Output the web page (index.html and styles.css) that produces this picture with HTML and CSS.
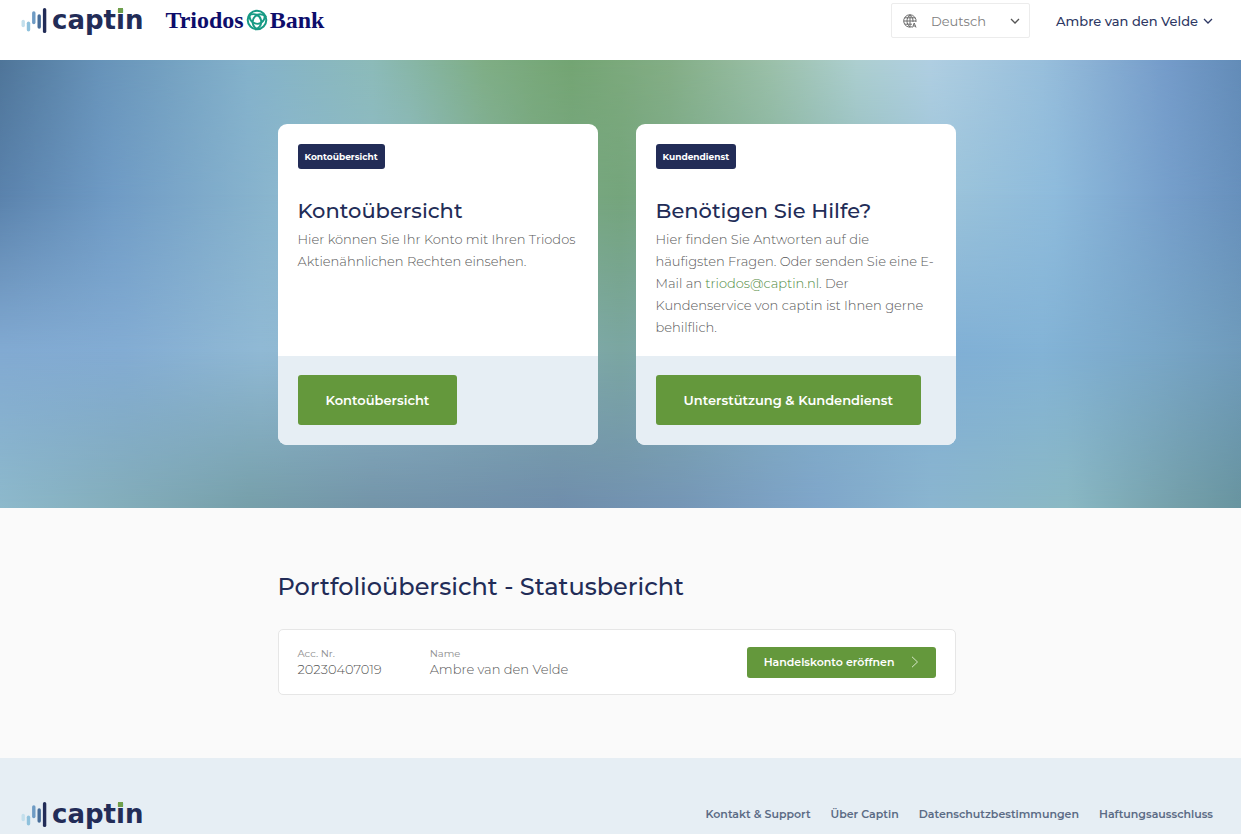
FILE: index.html
```html
<!DOCTYPE html>
<html lang="de">
<head>
<meta charset="utf-8">
<meta name="viewport" content="width=device-width, initial-scale=1">
<title>Captin – Triodos Bank</title>
<link rel="stylesheet" href="styles.css">
</head>
<body>
<header class="topbar">
  <div class="brands">
    <a class="captin" href="#">
      <svg class="captin-bars" width="26" height="28" viewBox="0 0 26 28" fill="none" stroke-width="3.4" stroke-linecap="round" aria-hidden="true">
        <path stroke="#c3dfec" d="M2.2 15.5v4"/>
        <path stroke="#8fc1dc" d="M7.5 17.2v6.6"/>
        <path stroke="#6e9bc4" d="M12.8 7v9.5"/>
        <path stroke="#466c98" d="M18.2 10v11"/>
        <path stroke="#222c57" d="M23.6 3.8v21.6"/>
      </svg>
      <span class="captin-word">capt<span class="captin-i">i</span>n</span>
    </a>
    <a class="triodos" href="#">
      <span>Triodos</span>
      <svg width="22" height="22" viewBox="0 0 22 22" fill="none" stroke="#179a84" aria-hidden="true">
        <circle cx="11" cy="11" r="9.3" stroke-width="2"/>
        <g stroke-width="1.9">
          <path d="M3 6.500C8 3.500 14 6 15 11s-2 8-6 9.400"/>
          <path d="M3 6.500C8 3.500 14 6 15 11s-2 8-6 9.400" transform="rotate(120 11 11)"/>
          <path d="M3 6.500C8 3.500 14 6 15 11s-2 8-6 9.400" transform="rotate(240 11 11)"/>
        </g>
      </svg>
      <span>Bank</span>
    </a>
  </div>
  <div class="tools">
    <div class="language">
      <svg width="14" height="14" viewBox="0 0 14 14" fill="none" stroke="#6c6c6c" aria-hidden="true">
        <path d="M9 12.800A6.200 6.200 0 1 1 13 8M.8 7H13M1.800 3.800h10.400M1.800 10.200H9M7 .8V13M7 .8C3 4 3 10 7 13M7 .8c2.500 2 3.200 4.500 3 7.200M9.500 13.500l1.700-4.500 1.800 4.500M10.200 12h2.200"/>
      </svg>
      <select class="language-select" aria-label="Sprache">
        <option>Deutsch</option>
      </select>
      <svg class="chevron" width="10" height="6" viewBox="0 0 10 6" fill="none" stroke="#555" stroke-width="1.300" aria-hidden="true"><path d="M1 1l4 4 4-4"/></svg>
    </div>
    <button class="account" type="button">Ambre van den Velde
      <svg width="10" height="6" viewBox="0 0 10 6" fill="none" stroke="currentColor" stroke-width="1.300" aria-hidden="true"><path d="M1 1l4 4 4-4"/></svg>
    </button>
  </div>
</header>

<main>
  <section class="hero">
    <div class="sky sky-1"></div>
    <div class="sky sky-2"></div>
    <div class="sky sky-3"></div>
    <div class="sky sky-4"></div>
    <div class="wrap cards">
      <article class="card">
        <div class="card-body">
          <span class="tag">Kontoübersicht</span>
          <h2 class="card-title">Kontoübersicht</h2>
          <p class="card-text">Hier können Sie Ihr Konto mit Ihren Triodos Aktienähnlichen Rechten einsehen.</p>
        </div>
        <div class="card-foot"><button class="btn" type="button">Kontoübersicht</button></div>
      </article>
      <article class="card">
        <div class="card-body">
          <span class="tag">Kundendienst</span>
          <h2 class="card-title">Benötigen Sie Hilfe?</h2>
          <p class="card-text">Hier finden Sie Antworten auf die häufigsten Fragen. Oder senden Sie eine E-Mail an <a class="mail" href="mailto:triodos@captin.nl">triodos@captin.nl</a>. Der Kundenservice von captin ist Ihnen gerne behilflich.</p>
        </div>
        <div class="card-foot"><button class="btn" type="button">Unterstützung &amp; Kundendienst</button></div>
      </article>
    </div>
  </section>

  <section class="portfolio">
    <div class="wrap">
      <h1 class="portfolio-title">Portfolioübersicht - Statusbericht</h1>
      <div class="row">
        <dl class="facts">
          <div class="fact"><dt>Acc. Nr.</dt><dd>20230407019</dd></div>
          <div class="fact"><dt>Name</dt><dd>Ambre van den Velde</dd></div>
        </dl>
        <button class="btn btn-small" type="button">Handelskonto eröffnen
          <svg width="8" height="12" viewBox="0 0 8 12" fill="none" stroke="#d5e6c8" aria-hidden="true"><path d="M1 .8L6.500 6 1 11.200"/></svg>
        </button>
      </div>
    </div>
  </section>
</main>

<footer class="footer">
  <a class="captin" href="#">
    <svg class="captin-bars" width="26" height="28" viewBox="0 0 26 28" fill="none" stroke-width="3.4" stroke-linecap="round" aria-hidden="true">
      <path stroke="#c3dfec" d="M2.2 15.5v4"/>
      <path stroke="#8fc1dc" d="M7.5 17.2v6.6"/>
      <path stroke="#6e9bc4" d="M12.8 7v9.5"/>
      <path stroke="#466c98" d="M18.2 10v11"/>
      <path stroke="#222c57" d="M23.6 3.8v21.6"/>
    </svg>
    <span class="captin-word">capt<span class="captin-i">i</span>n</span>
  </a>
  <nav class="links">
    <a href="#">Kontakt &amp; Support</a>
    <a href="#">Über Captin</a>
    <a href="#">Datenschutzbestimmungen</a>
    <a href="#">Haftungsausschluss</a>
  </nav>
</footer>
</body>
</html>
```
FILE: styles.css
```css
* { box-sizing: border-box; }

body {
  margin: 0;
  min-height: 100vh;
  background: #fafafa;
  color: #585858;
  font-family: Montserrat, Inter, sans-serif;
  font-size: 13px;
}

a { color: inherit; text-decoration: none; }
h1, h2, p, dl, dd { margin: 0; }
button { border: 0; font-family: inherit; cursor: pointer; }

.wrap { max-width: 678px; margin: 0 auto; }

.topbar {
  display: flex;
  justify-content: space-between;
  align-items: flex-start;
  height: 60px;
  padding: 0 28px 0 21px;
  background: #fff;
}

.brands { display: flex; align-items: center; gap: 22px; height: 40px; }

.captin { display: flex; align-items: center; gap: 5px; }
.captin-word {
  color: #222c57;
  font: bold 26px/30px "DejaVu Sans", sans-serif;
}
.captin-i { position: relative; }
.captin-i::after {
  content: "";
  position: absolute;
  top: 3px;
  left: 2px;
  width: 5px;
  height: 5px;
  background: #6f9f4c;
}

.triodos {
  display: flex;
  align-items: center;
  gap: 2px;
  color: #0d0d6b;
  font: bold 24px/30px "Liberation Serif", serif;
}

.tools { display: flex; align-items: center; gap: 26px; padding-top: 3px; }

.language {
  display: flex;
  align-items: center;
  gap: 14px;
  width: 139px;
  height: 35px;
  padding: 0 9px 0 11px;
  border: 1px solid #ececec;
  border-radius: 2px;
}
.language-select {
  flex: 1;
  min-width: 0;
  padding: 0;
  border: 0;
  appearance: none;
  background: none;
  color: #808080;
  font: 13px Montserrat, Inter, sans-serif;
}

.account {
  display: flex;
  align-items: center;
  gap: 5px;
  padding: 0;
  background: none;
  color: #2d3763;
  font-size: 13px;
  font-weight: 500;
}

.hero { position: relative; padding: 64px 28px 63px 20px; }
.sky { position: absolute; inset: 0; }
.sky-1 { background: linear-gradient(90deg, #4f7599 0%, #6793b9 8%, #84b2cb 20%, #8cbbb9 30%, #7fae85 39%, #74a573 46%, #84ae86 54%, #9bc0a9 62%, #adcfd0 69%, #b0cfe2 75%, #98bfdc 84%, #759cca 94%, #638cb8 100%); }
.sky-2 {
  background: linear-gradient(90deg, #5a82ac 0%, #6f9bc5 9%, #8cb8cf 23%, #8fbbc4 33%, #7baa85 43%, #75a57c 50%, #86b39f 62%, #9cc4da 76%, #8ebbdc 85%, #769fcb 94%, #6790bc 100%);
  mask-image: linear-gradient(transparent 0%, #000 30%);
}
.sky-3 {
  background: linear-gradient(90deg, #82aad2 0%, #83acd3 10%, #90b9d4 21%, #8cb5c8 33%, #7ba6a2 50%, #81aec0 62%, #80afd5 76%, #83b3d6 84%, #79a7c8 93%, #6f9bbb 100%);
  mask-image: linear-gradient(transparent 30%, #000 65%);
}
.sky-4 {
  background: linear-gradient(90deg, #8db9cb 0%, #84aebb 9%, #769fa9 20%, #7394a8 30%, #6f8dab 45%, #7596b6 55%, #7fa6ca 66%, #8ab5cf 75%, #8ab8c3 86%, #749fa9 95%, #68949f 100%);
  mask-image: linear-gradient(transparent 65%, #000 100%);
}

.cards {
  position: relative;
  display: grid;
  grid-template-columns: 1fr 1fr;
  gap: 38px;
}
.card {
  display: flex;
  flex-direction: column;
  overflow: hidden;
  border-radius: 9px;
  background: #fff;
}
.card-body { flex: 1; padding: 20px 20px 18px; }
.tag {
  display: inline-block;
  padding: 0 7px;
  border-radius: 3px;
  background: #222c57;
  color: #fff;
  font-size: 9px;
  font-weight: 700;
  line-height: 25px;
}
.card-title {
  margin: 26px 0 1px;
  color: #222c57;
  font-size: 21px;
  font-weight: 500;
  line-height: 32px;
}
.card-text { font-weight: 300; line-height: 22px; }
.mail { color: #4f8a42; }
.card-foot { padding: 19px 20px 20px; background: #e6eef4; }

.btn {
  padding: 0 28px;
  border-radius: 3px;
  background: #64983c;
  color: #fff;
  font-size: 13px;
  font-weight: 600;
  line-height: 50px;
}

.portfolio { padding: 60px 28px 63px 20px; }
.portfolio-title {
  color: #222c57;
  font-size: 24px;
  font-weight: 500;
  line-height: 38px;
}
.row {
  display: flex;
  justify-content: space-between;
  align-items: center;
  margin-top: 23px;
  padding: 16px 19px;
  border: 1px solid #e6e6e6;
  border-radius: 5px;
  background: #fff;
}
.facts { display: flex; gap: 48px; }
.fact dt { color: #8e8e8e; font-size: 10px; line-height: 15px; }
.fact dd { font-weight: 300; line-height: 17px; }
.btn-small {
  display: flex;
  align-items: center;
  gap: 16px;
  padding: 0 17px;
  font-size: 11px;
  line-height: 31px;
}

.footer {
  display: flex;
  justify-content: space-between;
  align-items: center;
  padding: 41px 28px 41px 21px;
  background: #e6eef4;
}
.links {
  display: flex;
  gap: 20px;
  color: #5b6b85;
  font-size: 11px;
  font-weight: 600;
}
```
